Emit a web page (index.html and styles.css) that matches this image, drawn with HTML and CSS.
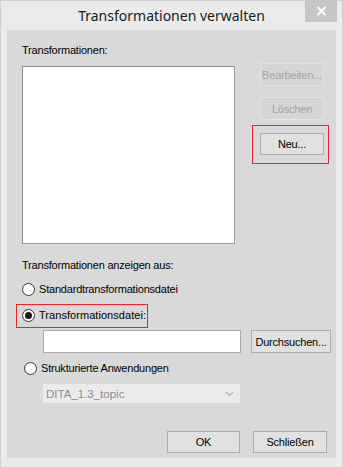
FILE: index.html
```html
<!DOCTYPE html>
<html lang="de">
<head>
<meta charset="utf-8">
<title>Transformationen verwalten</title>
<link rel="stylesheet" href="styles.css">
</head>
<body>
<div class="window">
  <div class="titlebar">
    <span></span>
    <span class="title">Transformationen verwalten</span>
    <span class="close"><svg width="11" height="10" viewBox="0 0 11 10"><path d="M1.5 1 L9.5 9 M9.5 1 L1.5 9" stroke="#fff" stroke-width="2" fill="none"/></svg></span>
  </div>
  <div class="client">
    <div class="label first">Transformationen:</div>
    <div class="listrow">
      <div class="listbox"></div>
      <div class="btncol">
        <button class="btn disabled b-edit">Bearbeiten...</button>
        <button class="btn disabled b-del">Löschen</button>
        <button class="btn b-new hl-new">Neu...</button>
      </div>
    </div>
    <div class="label second">Transformationen anzeigen aus:</div>
    <div class="radio r1"><span class="circle"></span><span>Standardtransformationsdatei</span></div>
    <div class="radio r2 hl-radio"><span class="circle checked"></span><span class="wide">Transformationsdatei:</span></div>
    <div class="filerow">
      <div class="textbox"></div>
      <button class="btn b-browse">Durchsuchen...</button>
    </div>
    <div class="radio r3"><span class="circle"></span><span>Strukturierte Anwendungen</span></div>
    <div class="select">
      <span>DITA_1.3_topic</span>
      <svg width="9" height="6" viewBox="0 0 9 6"><path d="M1 1 L4.5 4.5 L8 1" stroke="#b5b5b5" stroke-width="1.3" fill="none"/></svg>
    </div>
    <div class="footer">
      <button class="btn b-ok">OK</button>
      <button class="btn b-close">Schließen</button>
    </div>
  </div>
</div>
</body>
</html>
```
FILE: styles.css
```css
* { box-sizing: border-box; }
html, body { margin: 0; padding: 0; }
body {
  width: 343px;
  height: 468px;
  background: #ebebeb;
  font-family: "Liberation Sans", Arial, sans-serif;
  font-size: 11px;
  color: #000;
}
.window {
  width: 343px;
  height: 468px;
  border: 1px solid #cfcfcf;
  background: #ebebeb;
  display: flex;
  flex-direction: column;
}
.titlebar {
  height: 29px;
  display: grid;
  grid-template-columns: 1fr auto 1fr;
  align-items: start;
}
.title {
  font-family: "Noto Sans", "Open Sans", sans-serif;
  font-size: 14px;
  line-height: 29px;
  color: #1a1a1a;
}
.close {
  justify-self: end;
  margin-top: -1px;
  margin-right: 5px;
  width: 32px;
  height: 22px;
  background: #c7c7c7;
  display: flex;
  align-items: center;
  justify-content: center;
}
.client {
  margin: 0 6px 0 6px;
  height: 428px;
  background: #d9d9d9;
  padding: 14px 0 0 15px;
  display: flex;
  flex-direction: column;
  align-items: flex-start;
}
.label { line-height: 13px; letter-spacing: -0.2px; }
.listrow {
  display: flex;
  margin-top: 9px;
  height: 178px;
}
.listbox {
  width: 213px;
  height: 178px;
  background: #fff;
  border: 1px solid #8a8a8a;
  border-right-color: #9e9e9e;
  border-bottom-color: #9e9e9e;
}
.btncol {
  margin-left: 25px;
  margin-top: -3px;
  display: flex;
  flex-direction: column;
}
.btn {
  font-family: "Liberation Sans", Arial, sans-serif;
  font-size: 11px;
  letter-spacing: -0.2px;
  color: #000;
  background: #e1e1e1;
  border: 1px solid #adadad;
  padding: 0;
  height: 23px;
  width: 64px;
}
.btn.disabled {
  color: #a3a3a3;
  background: #d6d6d6;
  border-color: #e4e4e4;
}
.b-del { margin-top: 11px; }
.b-new { margin-top: 13px; height: 22px; position: relative; }
.hl-new::after {
  content: "";
  position: absolute;
  left: -9px; top: -9px; right: -6px; bottom: -10px;
  border: 1.5px solid #e8262c;
}
.second { margin-top: 15px; }
.radio {
  display: flex;
  align-items: center;
  gap: 4px;
  line-height: 13px;
  letter-spacing: -0.2px;
  position: relative;
}
.radio .wide { letter-spacing: 0.05px; }
.circle {
  width: 13px;
  height: 13px;
  border-radius: 50%;
  border: 1px solid #333;
  background: #fff;
  display: flex;
  align-items: center;
  justify-content: center;
}
.circle.checked::before {
  content: "";
  width: 7px;
  height: 7px;
  border-radius: 50%;
  background: #1a1a1a;
}
.r1 { margin-top: 11px; }
.r2 { margin-top: 13px; }
.hl-radio::after {
  content: "";
  position: absolute;
  left: -6px; top: -5px; right: -2px; bottom: -6px;
  border: 1.5px solid #e8262c;
}
.filerow {
  display: flex;
  margin-top: 8px;
  margin-left: 21px;
}
.textbox {
  width: 198px;
  height: 23px;
  background: #fff;
  border: 1px solid #ababab;
}
.b-browse {
  margin-left: 10px;
  width: 80px;
}
.r3 { margin-top: 9px; margin-left: 2px; }
.select {
  margin-top: 9px;
  margin-left: 21px;
  width: 197px;
  height: 19px;
  background: #ebebeb;
  color: #8c8c8c;
  display: flex;
  align-items: center;
  justify-content: space-between;
  padding: 0 6px 0 3px;
  font-size: 11.5px;
}
.footer {
  margin-top: 28px;
  margin-left: 145px;
  display: flex;
  gap: 13px;
}
.b-ok { width: 73px; height: 22px; }
.b-close { width: 74px; height: 22px; }
```
